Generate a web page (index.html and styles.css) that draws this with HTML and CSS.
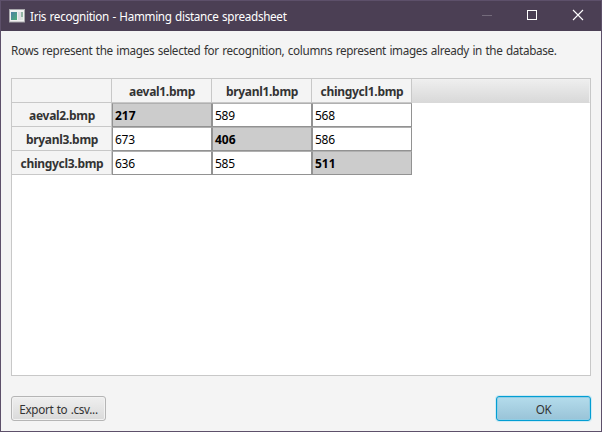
FILE: index.html
```html
<!DOCTYPE html>
<html lang="en">
<head>
<meta charset="utf-8">
<title>Iris recognition - Hamming distance spreadsheet</title>
<link rel="stylesheet" href="styles.css">
</head>
<body>
<div class="window">
  <header class="titlebar">
    <svg class="app-icon" width="16" height="14" viewBox="0 0 16 14">
      <defs><linearGradient id="g" x1="0" y1="0" x2="1" y2="1"><stop offset="0" stop-color="#4c7fa5"/><stop offset="1" stop-color="#4fae78"/></linearGradient></defs>
      <rect x="0.5" y="0.5" width="15" height="12.5" fill="#f1f1f1" stroke="#aaa9ad"/>
      <rect x="2" y="3" width="6" height="8" fill="url(#g)"/>
      <rect x="9" y="3" width="3" height="8" fill="#dedde3"/>
      <rect x="12" y="3" width="2" height="5" fill="#93b5a5"/>
      <rect x="12" y="8" width="2" height="3" fill="#dce6df"/>
    </svg>
    <h1 class="title">Iris recognition - Hamming distance spreadsheet</h1>
    <div class="controls">
      <svg width="46" height="30" viewBox="0 0 46 30"><path d="M19 14.5h10" stroke="#746b7b"/></svg>
      <svg width="46" height="30" viewBox="0 0 46 30"><rect x="18.5" y="9.5" width="9" height="9" fill="none" stroke="#fff"/></svg>
      <svg width="46" height="30" viewBox="0 0 46 30"><path d="M18 9l10 10M28 9l-10 10" stroke="#fff" stroke-width="1.1"/></svg>
    </div>
  </header>
  <main class="content">
    <p class="description">Rows represent the images selected for recognition, columns represent images already in the database.</p>
    <div class="sheet">
      <div class="grid">
        <div class="head"></div><div class="head">aeval1.bmp</div><div class="head">bryanl1.bmp</div><div class="head">chingycl1.bmp</div><div class="filler"></div>
        <div class="head">aeval2.bmp</div><div class="cell match">217</div><div class="cell">589</div><div class="cell">568</div><div></div>
        <div class="head">bryanl3.bmp</div><div class="cell">673</div><div class="cell match">406</div><div class="cell">586</div><div></div>
        <div class="head">chingycl3.bmp</div><div class="cell">636</div><div class="cell">585</div><div class="cell match">511</div><div></div>
      </div>
    </div>
    <footer class="actions">
      <button class="button export">Export to .csv...</button>
      <button class="button ok">OK</button>
    </footer>
  </main>
</div>
</body>
</html>
```

FILE: styles.css
```css
* { box-sizing: border-box; }
body { margin: 0; font: 11.7px/16px "Noto Sans", "Open Sans", sans-serif; color: #333; }
.window { width: 602px; height: 432px; border: 1px solid #5d506a; background: #f4f4f4; }
.titlebar { display: flex; align-items: center; height: 30px; padding-left: 8px; background: #4b3f54; }
.app-icon { margin-right: 5px; }
.title { margin: 0; font-size: 11.7px; font-weight: 400; color: #fff; white-space: nowrap; letter-spacing: -0.31px; word-spacing: 0.7px; }
.controls { display: flex; margin-left: auto; }
.controls svg { display: block; }
.content { padding: 11px 10px 0; }
.description { margin: 0 0 20px; white-space: nowrap; letter-spacing: -0.32px; word-spacing: 0.7px; }
.sheet { height: 298px; border: 1px solid #c8c8c8; background: #fff; }
.grid { display: grid; grid-template-columns: repeat(4, 100px) 1fr; grid-auto-rows: 24px; }
.head { display: flex; align-items: center; justify-content: center; background: #f4f4f4; border-right: 1px solid #c8c8c8; border-bottom: 1px solid #c8c8c8; font-size: 12px; font-weight: 700; letter-spacing: -0.3px; padding: 3px 0 0 1px; }
.filler { background: linear-gradient(#eee, #d9d9d9); border: 1px solid #f0f0f0; border-left: 0; border-bottom-color: #d9d9d9; }
.cell { display: flex; align-items: center; padding: 2px 0 0 2px; border: 1px solid #929292; border-top-color: #b0b0b0; background: #fff; color: #000; font-size: 12px; letter-spacing: -0.3px; }
.match { background: #ccc; font-weight: 700; letter-spacing: 0; }
.actions { display: flex; justify-content: space-between; margin-top: 20px; }
.button { height: 25px; padding: 0; border: 1px solid #b5b5b5; border-radius: 3px; font: inherit; color: #333; background: linear-gradient(#efefef, #dadada); box-shadow: inset 0 0 0 1px #f2f2f2; letter-spacing: -0.31px; word-spacing: 0.6px; }
.export { width: 95px; }
.ok { width: 95px; border-color: #039ed3; background: linear-gradient(#b4dcec, #99c3d7); box-shadow: inset 0 0 0 1px #8fcde5, 0 0 0 1px #cfeaf4; }
```
